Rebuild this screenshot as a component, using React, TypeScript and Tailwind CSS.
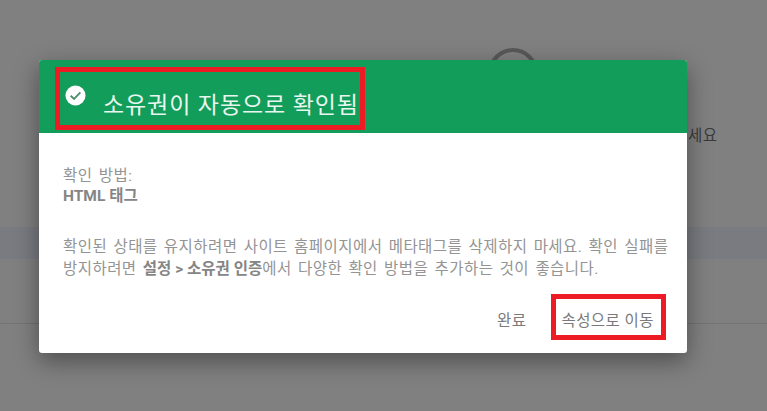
const KR = "font-['Roboto','Noto_Sans_CJK_KR',sans-serif]";

function CheckCircle() {
  return (
    <svg width="21" height="21" viewBox="0 0 22 22" className="shrink-0">
      <circle cx="11" cy="11" r="10.5" fill="#fff" />
      <path d="M6 11.2l3.5 3.4 6.6-6.8" fill="none" stroke="#4f8f6c" strokeWidth="2" />
    </svg>
  );
}

function Backdrop() {
  return (
    <div className="relative h-[411px] w-[767px] overflow-hidden bg-[#808080]">
      <div className="mt-[227px] h-[32px] bg-[#797b80]" />
      <div className="mt-[64px] h-px bg-[#737373]" />
      {/* spinner mostly hidden behind the dialog */}
      <div className="absolute left-[488px] top-[48px] size-[50px] rounded-full border-[4px] border-[#585858]" />
      <span className="absolute left-[688px] top-[126px] text-[15.5px] leading-[20px] tracking-[0.4px] text-[#3a3a3a]">세요</span>
    </div>
  );
}

export default function App() {
  return (
    <div className={`relative h-[411px] w-[767px] overflow-hidden ${KR}`}>
      <Backdrop />

      <div className="absolute left-[39px] top-[60px] flex h-[293px] w-[648px] flex-col overflow-hidden rounded-[3px] bg-white shadow-[0_8px_24px_rgba(0,0,0,0.4)]">
        <div className="flex h-[73px] items-start bg-[#129e5a] pl-[26px] pr-6 pt-[25px]">
          <CheckCircle />
          <h1 className="ml-[17px] mt-[7px] whitespace-nowrap text-[23px] leading-[28px] tracking-[0.9px] text-[#e9f6ef]">소유권이 자동으로 확인됨</h1>
        </div>

        <div className="flex-1 whitespace-nowrap px-6 pt-[33px] text-[15.5px] leading-[20px] tracking-[0.45px] text-[#949494] [word-spacing:2px]">
          <p>확인 방법:</p>
          <p className="font-bold tracking-[0px] text-[#858585] [word-spacing:0px]">HTML 태그</p>
          <p className="mt-[30px] leading-[22px]">
            확인된 상태를 유지하려면 사이트 홈페이지에서 메타태그를 삭제하지 마세요. 확인 실패를
            <br />
            방지하려면 <b className="font-bold tracking-[0px] text-[#858585] [word-spacing:0px]">설정 &gt; 소유권 인증</b>에서 다양한 확인 방법을 추가하는 것이 좋습니다.
          </p>
        </div>

        <div className="flex items-center justify-end gap-[35px] pb-[21px] pr-[33px] text-[15.5px] leading-[22px] tracking-[0.45px] text-[#7a7a7a] [word-spacing:2px]">
          <button type="button">완료</button>
          <button type="button">속성으로 이동</button>
        </div>
      </div>

      {/* annotation boxes drawn on top of the screenshot */}
      <div className="absolute left-[55px] top-[67px] h-[63px] w-[310px] border-[5px] border-[#ed1c24]" />
      <div className="absolute left-[551px] top-[294px] h-[46px] w-[115px] border-[5px] border-[#ed1c24]" />
    </div>
  );
}
